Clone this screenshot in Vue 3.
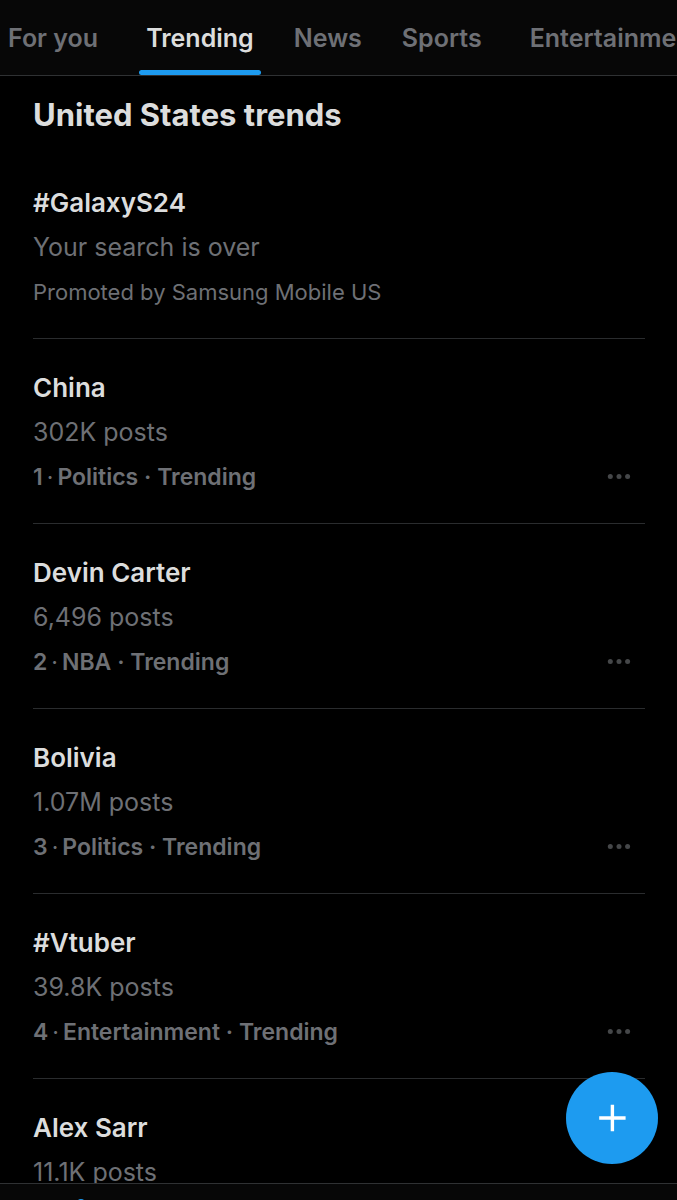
<template>
  <div class="explore">
    <nav class="tabs" aria-label="Explore">
      <a
        v-for="tab in tabs"
        :key="tab"
        href="#"
        :class="['tab', { active: tab === current }]"
        @click.prevent="current = tab"
      >{{ tab }}</a>
    </nav>
    <main class="content">
      <h1 class="heading">United States trends</h1>
      <ul class="list">
        <li v-for="item in trends" :key="item.name" class="trend">
          <h2 class="name">{{ item.name }}</h2>
          <p class="detail">{{ item.detail }}</p>
          <p v-if="item.promoted" class="meta">{{ item.promoted }}</p>
          <div v-else class="meta-row">
            <p class="meta strong">{{ item.rank }}<span class="rank-dot">·</span>{{ item.topic }}</p>
            <button type="button" class="more" :aria-label="'More options for ' + item.name">
              <svg width="24" height="6" viewBox="0 0 24 6" fill="currentColor">
                <circle cx="3.3" cy="2.6" r="2.5" />
                <circle cx="12" cy="2.6" r="2.5" />
                <circle cx="20.6" cy="2.6" r="2.5" />
              </svg>
            </button>
          </div>
        </li>
      </ul>
    </main>
    <footer class="bottom-bar">
      <span class="unread"></span>
    </footer>
    <button type="button" class="compose" aria-label="New post">
      <svg width="28" height="28" viewBox="0 0 28 28" stroke="#fff" stroke-width="3.4">
        <path d="M14.4 0.8v26.4M1.2 14h26.4" />
      </svg>
    </button>
  </div>
</template>

<script setup>
import { ref } from 'vue'
const tabs = ['For you', 'Trending', 'News', 'Sports', 'Entertainment']
const current = ref('Trending')
const trends = [
  { name: '#GalaxyS24', detail: 'Your search is over', promoted: 'Promoted by Samsung Mobile US' },
  { name: 'China', detail: '302K posts', rank: 1, topic: 'Politics · Trending' },
  { name: 'Devin Carter', detail: '6,496 posts', rank: 2, topic: 'NBA · Trending' },
  { name: 'Bolivia', detail: '1.07M posts', rank: 3, topic: 'Politics · Trending' },
  { name: '#Vtuber', detail: '39.8K posts', rank: 4, topic: 'Entertainment · Trending' },
  { name: 'Alex Sarr', detail: '11.1K posts', rank: 5, topic: 'NBA · Trending' }
]
</script>

<style>
body {
  margin: 0;
  background: #000;
}
</style>

<style scoped>
.explore {
  display: flex;
  flex-direction: column;
  height: 100vh;
  overflow: hidden;
  background: #000;
  color: #dcdddd;
  font-family: Inter, Roboto, sans-serif;
}
.tabs {
  display: flex;
  flex: none;
  gap: 26px;
  padding-left: 1px;
  overflow: hidden;
  background: #070707;
  border-bottom: 1px solid #2f3133;
}
.tab {
  position: relative;
  flex: none;
  padding: 2px 7px 0;
  line-height: 73px;
  font-size: 25px;
  font-weight: 600;
  color: #6e7075;
  text-decoration: none;
}
.tab:nth-child(3n + 1) {
  margin-right: 8px;
}
.tab.active {
  color: #dcdddd;
}
.tab.active::after {
  content: '';
  position: absolute;
  left: 0;
  right: 0;
  bottom: 0;
  height: 5px;
  border-radius: 3px;
  background: #1d9bf0;
}
.content {
  flex: 1;
  min-height: 0;
  padding: 0 32px 0 33px;
  overflow: hidden;
}
.heading {
  margin: 0;
  font-size: 31px;
  font-weight: 700;
  line-height: 78px;
}
.list {
  margin: 0;
  padding: 0;
  list-style: none;
}
.trend {
  padding: 27px 0 24px;
  border-bottom: 1px solid #2a2c2e;
}
.name {
  margin: 0;
  font-size: 26px;
  font-weight: 600;
  line-height: 44px;
}
.detail {
  margin: 0;
  font-size: 25px;
  line-height: 45px;
  color: #6e7075;
}
.meta {
  margin: 0;
  font-size: 22px;
  line-height: 44px;
  color: #6e7075;
}
.meta-row {
  display: flex;
  align-items: center;
  justify-content: space-between;
}
.strong {
  font-size: 23px;
  font-weight: 600;
}
.rank-dot {
  margin: 0 4px;
  font-weight: 400;
}
.more {
  display: flex;
  margin-right: 14px;
  padding: 0;
  border: 0;
  background: none;
  color: #454749;
}
.bottom-bar {
  position: relative;
  flex: none;
  height: 16px;
  background: #070707;
  border-top: 1px solid #2f3133;
}
.unread {
  position: absolute;
  left: 76px;
  top: 15px;
  width: 10px;
  height: 10px;
  border-radius: 50%;
  background: #1d9bf0;
}
.compose {
  position: absolute;
  right: 19px;
  bottom: 36px;
  display: flex;
  align-items: center;
  justify-content: center;
  width: 92px;
  height: 92px;
  padding: 0;
  border: 0;
  border-radius: 50%;
  background: #1d9bf0;
}
</style>
